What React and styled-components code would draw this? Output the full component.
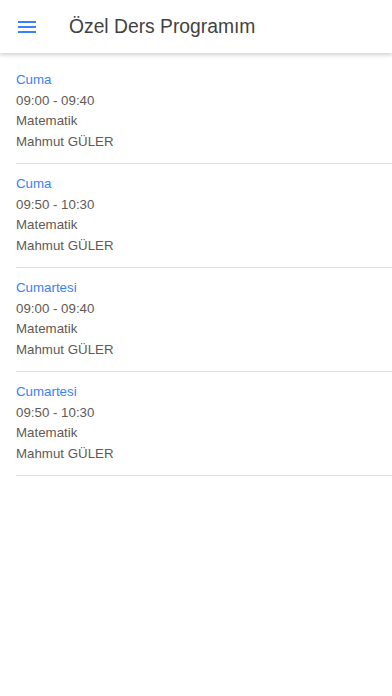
import styled, { createGlobalStyle } from "styled-components";

const Global = createGlobalStyle`
    body {
        margin: 0;
        background: #fff;
        font-family: "Liberation Sans", Arial, sans-serif;
    }
`
const Page = styled.div`
    min-height: 696px;
    background: #fff;
`
const Toolbar = styled.header`
    height: 53px;
    display: flex;
    align-items: center;
    box-shadow: 0 2px 4px rgba(0, 0, 0, 0.18);
    position: relative;
`
const MenuButton = styled.button`
    width: 54px;
    height: 53px;
    border: none;
    background: none;
    padding: 0 0 0 18px;
    display: flex;
    align-items: center;
`
const Title = styled.h1`
    margin: 0 0 0 15px;
    font-family: "Liberation Sans", Arial, sans-serif;
    font-size: 19.3px;
    font-weight: 400;
    color: #424242;
`
const List = styled.div`
    padding-top: 7px;
`
const Item = styled.div`
    margin-left: 16px;
    padding: 10px 0 11px;
    border-bottom: 1px solid #dedede;
    font-size: 13.3px;
    line-height: 20.5px;
    color: #5f5a55;
`
const Day = styled.div`
    color: #3880ff;
`

const lessons = [
    { day: "Cuma", time: "09:00 - 09:40" },
    { day: "Cuma", time: "09:50 - 10:30" },
    { day: "Cumartesi", time: "09:00 - 09:40" },
    { day: "Cumartesi", time: "09:50 - 10:30" },
]

export default function App(){
    return(
        <Page>
            <Global />
            <Toolbar>
                <MenuButton>
                    <svg width="18" height="14" viewBox="0 0 18 14">
                        <rect x="0" y="1" width="18" height="2" fill="#3880ff" />
                        <rect x="0" y="6" width="18" height="2" fill="#3880ff" />
                        <rect x="0" y="11" width="18" height="2" fill="#3880ff" />
                    </svg>
                </MenuButton>
                <Title>Özel Ders Programım</Title>
            </Toolbar>
            <List>
                {lessons.map((l, i) => (
                    <Item key={i}>
                        <Day>{l.day}</Day>
                        <div>{l.time}</div>
                        <div>Matematik</div>
                        <div>Mahmut GÜLER</div>
                    </Item>
                ))}
            </List>
        </Page>
    );
}
